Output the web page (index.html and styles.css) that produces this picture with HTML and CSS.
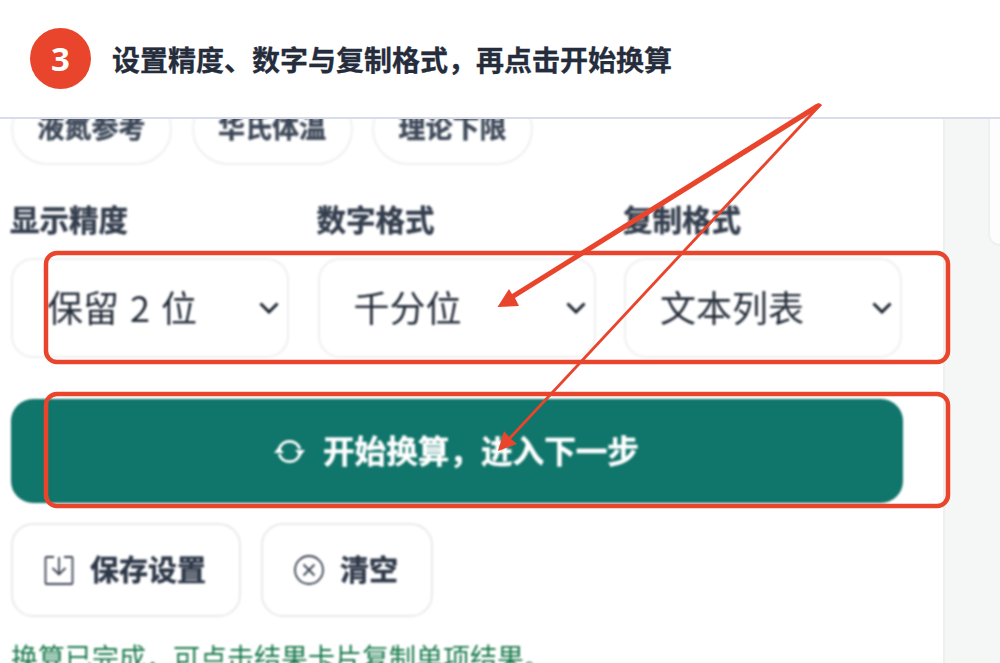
FILE: index.html
```html
<!DOCTYPE html>
<html lang="zh-CN">
<head>
	<meta charset="UTF-8">
	<title>换算</title>
	<link rel="stylesheet" href="styles.css">
</head>
<body>
	<div id="page">
		<!-- 步骤说明 -->
		<div class="banner">
			<span class="step">3</span>
			<h3>设置精度、数字与复制格式，再点击开始换算</h3>
		</div>
		<div class="stage">
			<div class="panel">
				<div class="chips">
					<button class="chip">液氮参考</button>
					<button class="chip">华氏体温</button>
					<button class="chip">理论下限</button>
				</div>
				<div class="fields">
					<div class="field">
						<label>显示精度</label>
						<div class="select">
							<span>保留 2 位</span>
							<svg class="chev" viewBox="0 0 20 12"><path d="M1.500 1.500 10 10l8.500-8.500"/></svg>
						</div>
					</div>
					<div class="field">
						<label>数字格式</label>
						<div class="select">
							<span>千分位</span>
							<svg class="chev" viewBox="0 0 20 12"><path d="M1.500 1.500 10 10l8.500-8.500"/></svg>
						</div>
					</div>
					<div class="field">
						<label>复制格式</label>
						<div class="select">
							<span>文本列表</span>
							<svg class="chev" viewBox="0 0 20 12"><path d="M1.500 1.500 10 10l8.500-8.500"/></svg>
						</div>
					</div>
				</div>
				<button class="start">
					<svg class="spin" viewBox="0 0 30 30">
						<path d="M5 12.500A10.500 10.500 0 0 1 25 12.500M25 17.500A10.500 10.500 0 0 1 5 17.500"/>
						<path class="fill" d="M0 16.500h9.500l-4.750-6zM20.500 13.500h9.500l-4.750 6z"/>
					</svg>
					<span class="start-text">开始换算，进入下一步</span>
				</button>
				<div class="actions">
					<button class="act">
						<svg class="ico" viewBox="0 0 30 30"><path d="M10 2H2.500a1 1 0 0 0-1 1v25a1 1 0 0 0 1 1h25a1 1 0 0 0 1-1V3a1 1 0 0 0-1-1H20M15 2v17M8.500 13l6.500 6.500 6.500-6.500"/></svg>
						<span>保存设置</span>
					</button>
					<button class="act">
						<svg class="ico" viewBox="0 0 30 30"><circle cx="15" cy="15" r="14"/><path d="m9.500 9.500 11 11M20.500 9.500l-11 11"/></svg>
						<span>清空</span>
					</button>
				</div>
				<p class="status">换算已完成，可点击结果卡片复制单项结果。</p>
			</div>
			<div class="side">
				<div class="card"></div>
			</div>
		</div>
		<!-- 标注 -->
		<svg class="marks" viewBox="0 0 1000 663">
			<rect x="46" y="253" width="902" height="109" rx="11"/>
			<rect x="46" y="394" width="902" height="112" rx="11"/>
			<polygon points="822,105 818,109 515,298 519,306 497.500,307 509,289 512,294 816,104 819,103"/>
			<polygon points="822,105 511,439 517,444 498,451 504,431 509,437 819,104"/>
		</svg>
	</div>
</body>
</html>
```

FILE: styles.css
```css
html,
body{
	margin: 0;
	padding: 0;
	width: 100%;
	height: 100%;
	overflow: hidden;
	background: #fff;
}
body,
button{
	font-family: "Noto Sans CJK SC", "Liberation Sans", sans-serif;
}
#page{
	width: 1000px;
	height: 663px;
	position: relative;
	overflow: hidden;
}
.banner{
	height: 119px;
	padding-left: 30px;
	display: flex;
	align-items: center;
	gap: 21px;
	box-sizing: border-box;
	background: #fff;
	border-bottom: 2px solid #d9dce9;
	position: relative;
	z-index: 2;
}
.banner h3{
	margin: 0;
	font-size: 28px;
	font-weight: 700;
	color: #252d3c;
	-webkit-text-stroke: 0.3px #252d3c;
}
.step{
	width: 61px;
	height: 61px;
	border-radius: 50%;
	background: #e9452c;
	color: #fff;
	font: 700 33px "Open Sans", sans-serif;
	display: flex;
	align-items: center;
	justify-content: center;
}
.stage{
	height: 544px;
	display: flex;
	overflow: hidden;
}
.panel{
	width: 943px;
	padding-left: 11px;
	box-sizing: border-box;
	filter: blur(0.8px);
}
.side{
	flex: 1;
	background: #f5f6f6;
	border-left: 2px solid #eef0f0;
	padding-left: 43px;
}
.card{
	height: 125px;
	background: #fdfdfd;
	border-left: 2px solid #eff0f1;
	border-bottom: 2px solid #eff0f1;
	border-bottom-left-radius: 20px;
}
.chips{
	display: flex;
	gap: 19.500px;
	margin-top: -26px;
}
.chip{
	width: 161px;
	height: 72px;
	border: 2px solid #eff0f2;
	border-radius: 36px;
	background: #fff;
	font-size: 27px;
	line-height: 64px;
	padding: 0 0 6px;
	font-weight: 700;
	color: #3c4757;
	-webkit-text-stroke: 0.4px #3c4757;
}
.fields{
	display: grid;
	grid-template-columns: 278px 278px 278px;
	gap: 28.500px;
	margin-top: 36px;
}
.field label{
	display: block;
	margin-left: -1px;
	font-size: 29.500px;
	line-height: 34px;
	font-weight: 700;
	color: #333d4d;
	-webkit-text-stroke: 0.4px #333d4d;
	margin-bottom: 23px;
}
.select{
	height: 100px;
	box-sizing: border-box;
	border: 2px solid #eeeff1;
	border-radius: 22px;
	background: #fff;
	padding: 0 8px 4px 35px;
	display: flex;
	align-items: center;
	justify-content: space-between;
	font-size: 36px;
	word-spacing: 3px;
	color: #252d3a;
}
.select span{
	margin-left: -1px;
}
.chev{
	width: 20px;
	height: 12px;
	position: relative;
	top: 2px;
	fill: none;
	stroke: #1c2330;
	stroke-width: 3;
}
.start{
	width: 892px;
	height: 104px;
	margin-top: 41px;
	border: 0;
	border-radius: 22px;
	background: #10756a;
	color: #fff;
	font-size: 31.600px;
	font-weight: 700;
	-webkit-text-stroke: 0.4px #fff;
	display: flex;
	align-items: center;
	justify-content: center;
	gap: 17px;
	padding: 0;
}
.start-text{
	position: relative;
	top: -2px;
}
.spin{
	width: 31px;
	height: 31px;
	fill: none;
	stroke: #fff;
	stroke-width: 2.800;
	position: relative;
	left: -1px;
}
.spin .fill{
	fill: #fff;
	stroke: none;
}
.actions{
	display: flex;
	gap: 20px;
	margin-top: 20px;
}
.act{
	height: 94px;
	box-sizing: border-box;
	padding: 0 33px 0 31px;
	border: 2px solid #e9eaee;
	border-radius: 22px;
	background: #fff;
	font-size: 29px;
	font-weight: 700;
	color: #2c3646;
	-webkit-text-stroke: 0.4px #2c3646;
	display: flex;
	align-items: center;
	gap: 16px;
}
.act span{
	position: relative;
	top: -2px;
}
.ico{
	width: 30px;
	height: 30px;
	fill: none;
	stroke: #3a4352;
	stroke-width: 1.800;
}
.status{
	margin: 20px 0 0;
	font-size: 27px;
	line-height: 40px;
	color: #197a4c;
	white-space: nowrap;
}
.marks{
	position: absolute;
	top: 0;
	left: 0;
	width: 1000px;
	height: 663px;
	z-index: 3;
}
.marks rect{
	fill: none;
	stroke: #e9452c;
	stroke-width: 4.500;
}
.marks polygon{
	fill: #e9452c;
}
```
